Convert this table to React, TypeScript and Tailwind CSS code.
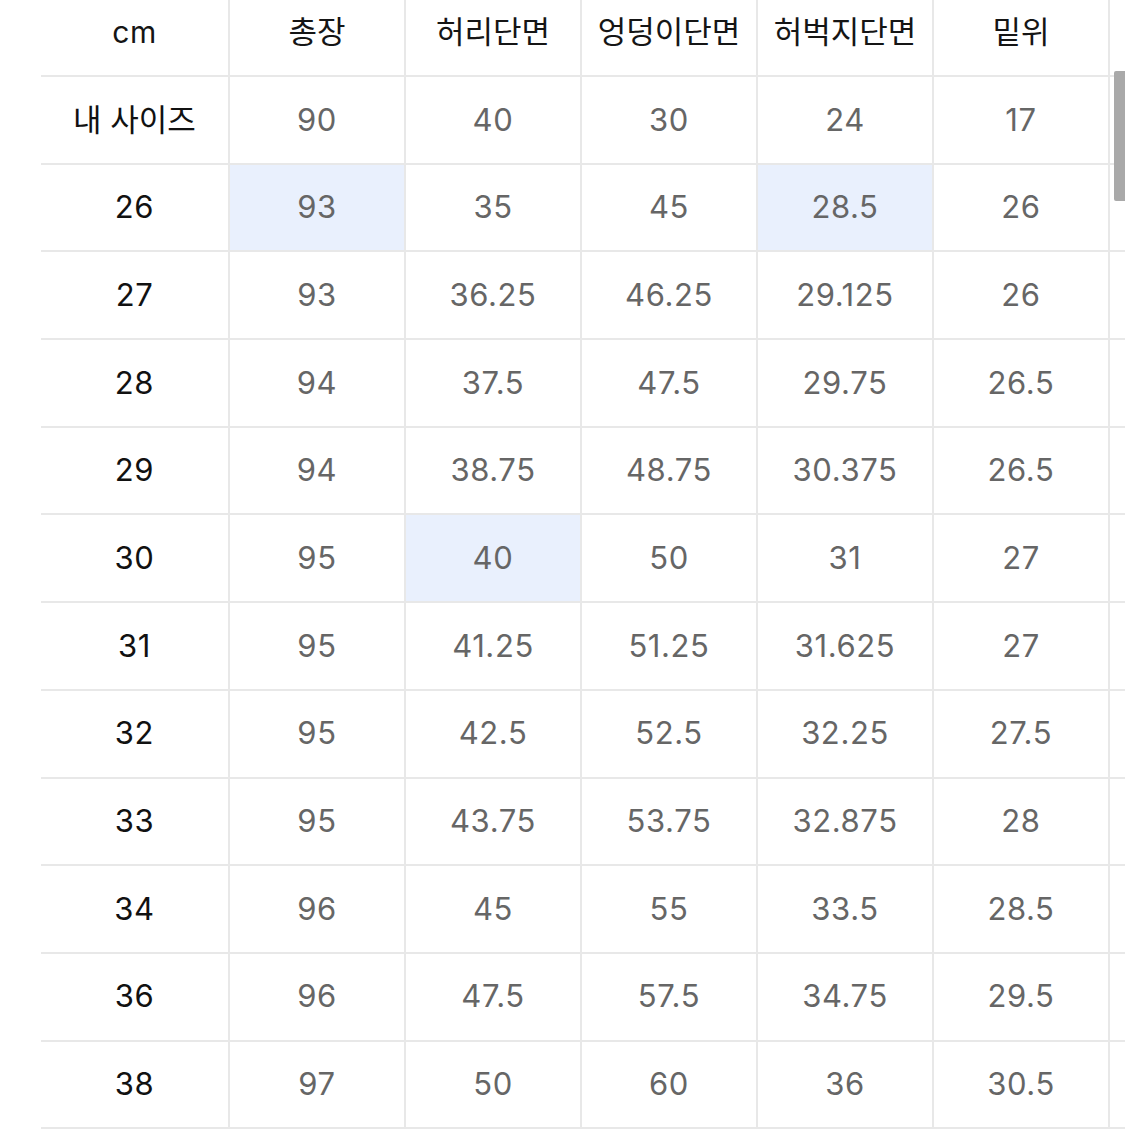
const headers = ["cm", "총장", "허리단면", "엉덩이단면", "허벅지단면", "밑위"];

type Row = { size: string; values: string[]; hi?: number[] };

const rows: Row[] = [
  { size: "내 사이즈", values: ["90", "40", "30", "24", "17"] },
  { size: "26", values: ["93", "35", "45", "28.5", "26"], hi: [0, 3] },
  { size: "27", values: ["93", "36.25", "46.25", "29.125", "26"] },
  { size: "28", values: ["94", "37.5", "47.5", "29.75", "26.5"] },
  { size: "29", values: ["94", "38.75", "48.75", "30.375", "26.5"] },
  { size: "30", values: ["95", "40", "50", "31", "27"], hi: [1] },
  { size: "31", values: ["95", "41.25", "51.25", "31.625", "27"] },
  { size: "32", values: ["95", "42.5", "52.5", "32.25", "27.5"] },
  { size: "33", values: ["95", "43.75", "53.75", "32.875", "28"] },
  { size: "34", values: ["96", "45", "55", "33.5", "28.5"] },
  { size: "36", values: ["96", "47.5", "57.5", "34.75", "29.5"] },
  { size: "38", values: ["97", "50", "60", "36", "30.5"] },
];

const font = { fontFamily: 'Inter, "Noto Sans CJK KR", sans-serif' };

export default function App() {
  return (
    <div className="relative w-[1125px] h-[1130px] overflow-hidden bg-white" style={font}>
      <div className="pl-[41px]">
        <div className="w-[1300px]">
          <div className="flex h-[77px] border-b-2 border-[#e8e8e8]">
            {headers.map((h, i) => (
              <div
                key={h}
                className={`flex items-center justify-center pb-[10px] text-[#151515] ${
                  i === 0 ? "w-[187px] text-[30px] tracking-[0.5px]" : "w-[176px] text-[31px] border-l-2 border-[#e8e8e8]"
                }`}
              >
                {h}
              </div>
            ))}
            <div className="w-[176px] border-l-2 border-[#e8e8e8]" />
          </div>
          {rows.map((r) => (
            <div key={r.size} className="flex h-[87.7px] border-b-2 border-[#e8e8e8]">
              <div
                className={`w-[187px] flex items-center justify-center text-[#111] ${
                  r.size.length > 2 ? "text-[31px]" : "text-[31px] tracking-[0.6px]"
                }`}
              >
                {r.size}
              </div>
              {r.values.map((v, i) => (
                <div
                  key={i}
                  className={`w-[176px] flex items-center justify-center border-l-2 border-[#e8e8e8] text-[31px] tracking-[0.6px] text-[#666] ${
                    r.hi?.includes(i) ? "bg-[#e9f0fd]" : ""
                  }`}
                >
                  {v}
                </div>
              ))}
              <div className="w-[176px] border-l-2 border-[#e8e8e8]" />
            </div>
          ))}
        </div>
      </div>
      <div className="absolute left-[1114px] top-[71px] w-[11px] h-[130px] bg-[#a9a9a9] rounded-l-[2px]" />
    </div>
  );
}
